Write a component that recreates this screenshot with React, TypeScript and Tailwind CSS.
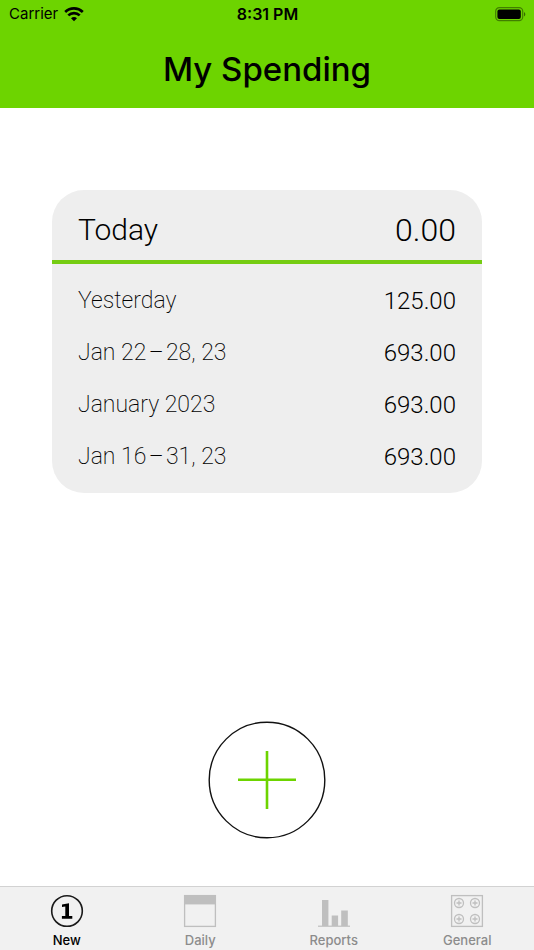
import type { ReactNode } from "react";
import { clsx } from "clsx";

interface Period {
    label: string;
    amount: string;
}

const periods: Period[] = [
    { label: "Yesterday", amount: "125.00" },
    { label: "Jan 22\u200A–\u200A28, 23", amount: "693.00" },
    { label: "January 2023", amount: "693.00" },
    { label: "Jan 16\u200A–\u200A31, 23", amount: "693.00" },
];

function StatusBar() {
    return (
        <div className="grid h-7 grid-cols-3 items-center pr-2 pl-[9px] text-[15px] leading-5">
            <div className="flex items-center gap-[6px]">
                <span>Carrier</span>
                <svg width="20" height="15" viewBox="0 0 20 15" fill="none" stroke="black" strokeWidth="2.7" aria-hidden="true">
                    <path d="M1.2 4.9C6.2 0.2 13.8 0.2 18.8 4.9" />
                    <path d="M4.3 8.4C7.5 5.3 12.5 5.3 15.7 8.4" />
                    <path d="M7 11.2C8.7 9.6 11.3 9.6 13 11.2L10 14.2Z" fill="black" stroke="none" />
                </svg>
            </div>
            <span className="text-center text-base leading-5 font-semibold">8:31 PM</span>
            <svg className="justify-self-end" width="31" height="15" viewBox="0 0 31 15" aria-hidden="true">
                <rect x="0.7" y="0.7" width="27" height="13" rx="3.6" fill="none" stroke="black" strokeOpacity="0.4" strokeWidth="1.2" />
                <rect x="2.4" y="2.4" width="23.4" height="9.6" rx="2" fill="black" />
                <path d="M29 5v4.4c1.8-.7 1.8-3.7 0-4.4Z" fill="black" fillOpacity="0.5" />
            </svg>
        </div>
    );
}

function SpendingCard() {
    return (
        <section className="mx-[52px] mt-[82px] overflow-hidden rounded-[32px] bg-[#eeeeee] pb-[10px] font-['Roboto','Liberation_Sans',sans-serif]">
            <table className="w-full border-separate border-spacing-0">
                <thead>
                    <tr className="h-[74px] leading-10">
                        <th scope="col" className="border-b-4 border-[#75cc12] pt-[10px] pl-[26px] text-left text-3xl leading-10 font-light">
                            Today
                        </th>
                        <th scope="col" className="border-b-4 border-[#75cc12] pt-[10px] pr-[26px] text-right text-[32px] leading-10 font-light">
                            0.00
                        </th>
                    </tr>
                </thead>
                <tbody className="before:block before:h-[11px]">
                    {periods.map((period) => (
                        <tr key={period.label} className="h-[52px]">
                            <th scope="row" className="pl-[26px] text-left text-[23px] leading-8 font-extralight">
                                {period.label}
                            </th>
                            <td className="pr-[26px] text-right text-2xl font-light">{period.amount}</td>
                        </tr>
                    ))}
                </tbody>
            </table>
        </section>
    );
}

function NewIcon() {
    return (
        <svg width="34" height="34" viewBox="0 0 34 34" aria-hidden="true">
            <circle cx="17" cy="17" r="15.3" fill="none" stroke="#1a1a1a" strokeWidth="1.6" />
            <path d="M12 10.6L19 9.3V22.1H22.3V24.7H11.9V22.1H15.3V12.5L12 13.1Z" fill="black" />
        </svg>
    );
}

function DailyIcon() {
    return (
        <svg width="34" height="34" viewBox="0 0 34 34" aria-hidden="true">
            <rect x="1.6" y="1.6" width="30.8" height="30.8" fill="none" stroke="#bfbfbf" strokeWidth="1.3" />
            <rect x="1" y="1" width="32" height="9.4" fill="#bfbfbf" />
        </svg>
    );
}

function ReportsIcon() {
    return (
        <svg width="34" height="34" viewBox="0 0 34 34" fill="#bfbfbf" aria-hidden="true">
            <path d="M5 6h6.4v26H5zM14.7 21.4h6.4V32h-6.4zM24.2 16.4h6.6V32h-6.6z" />
            <path d="M1 31.6h32v1.2H1z" />
        </svg>
    );
}

function GeneralIcon() {
    return (
        <svg width="34" height="34" viewBox="0 0 34 34" fill="none" stroke="#bfbfbf" strokeWidth="1.3" aria-hidden="true">
            <rect x="1.6" y="1.6" width="30.8" height="30.8" />
            {[9, 25].map((y) =>
                [9, 25].map((x) => (
                    <g key={`${x}-${y}`}>
                        <circle cx={x} cy={y} r="4.5" />
                        <path d={`M${x - 2.5} ${y}h5M${x} ${y - 2.5}v5`} />
                    </g>
                ))
            )}
        </svg>
    );
}

interface TabProps {
    label: string;
    icon: ReactNode;
    active?: boolean;
}

function Tab({ label, icon, active = false }: TabProps) {
    return (
        <a
            href="#"
            aria-current={active ? "page" : undefined}
            className={clsx(
                "flex flex-1 flex-col items-center gap-1 pt-[7px] text-[13px] leading-4 font-medium",
                active ? "text-black" : "text-[#8c8c8c]"
            )}
        >
            {icon}
            <span>{label}</span>
        </a>
    );
}

export default function App() {
    return (
        <div className="flex min-h-screen flex-col bg-white font-['Inter','Liberation_Sans',sans-serif] text-black">
            <header className="bg-[#6dd400] pb-[19px]">
                <StatusBar />
                <h1 className="pt-[21px] text-center text-[33px] leading-10 font-medium">My Spending</h1>
            </header>

            <main className="flex flex-1 flex-col">
                <SpendingCard />
                <button
                    type="button"
                    aria-label="Add spending"
                    className="mx-auto mt-auto mb-[47px] flex size-[118px] items-center justify-center rounded-full"
                >
                    <svg width="118" height="118" viewBox="0 0 118 118" fill="none" aria-hidden="true">
                        <circle cx="59" cy="59" r="57.8" stroke="#111111" strokeWidth="1.4" />
                        <path d="M30 58.7h58M59 30v58" stroke="#6dd400" strokeWidth="2.6" />
                    </svg>
                </button>
            </main>

            <nav className="flex h-16 border-t border-[#d2d2d2] bg-[#f1f1f1]">
                <Tab label="New" icon={<NewIcon />} active />
                <Tab label="Daily" icon={<DailyIcon />} />
                <Tab label="Reports" icon={<ReportsIcon />} />
                <Tab label="General" icon={<GeneralIcon />} />
            </nav>
        </div>
    );
}
